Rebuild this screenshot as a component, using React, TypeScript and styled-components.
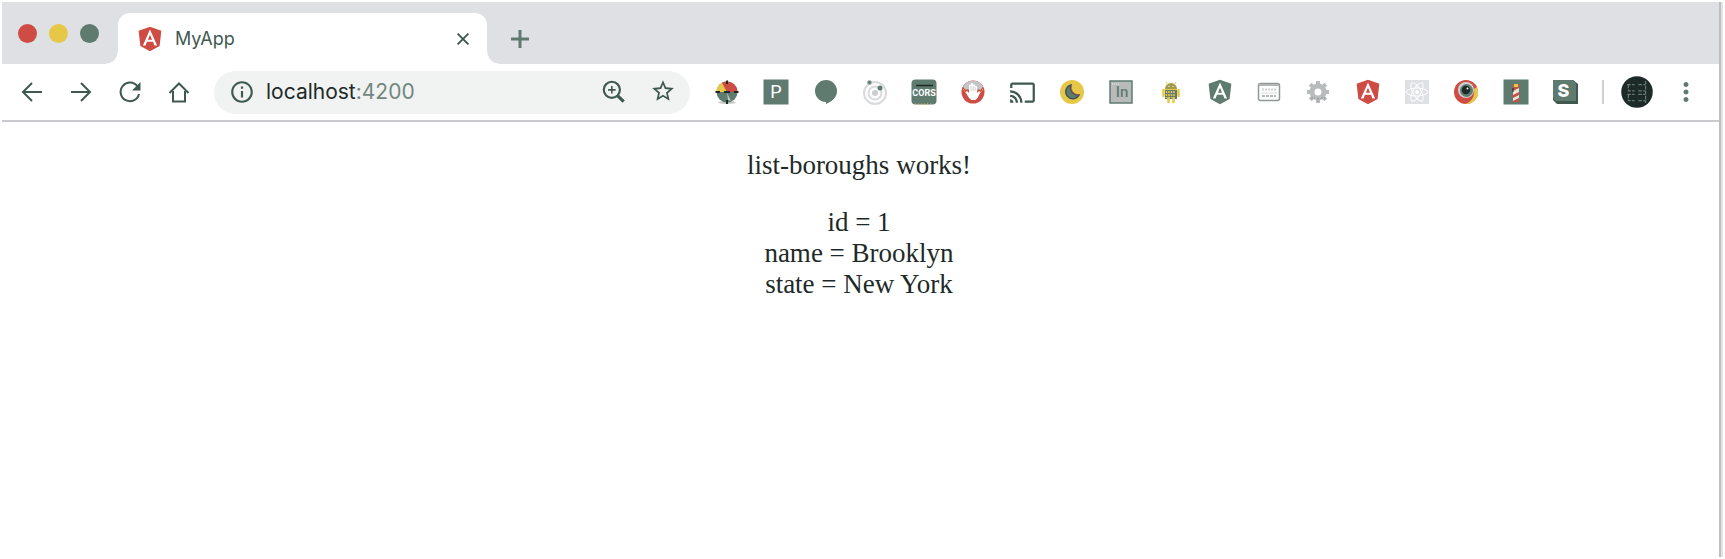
import React from 'react';
import styled, { createGlobalStyle } from 'styled-components';
import { MdCast, MdInfoOutline, MdMoreVert, MdStarBorder, MdZoomIn } from 'react-icons/md';
import { FaAngular, FaReact } from 'react-icons/fa';

const c = {
  green: '#5f7b70',
  dark: '#1d2a28',
  icon: '#3f5850',
  red: '#cf4c45',
  yellow: '#e6c748',
  strip: '#dfe0e4',
  field: '#f1f3f2',
  grey: '#bcbec0',
};

const Global = createGlobalStyle`
  * { box-sizing: border-box; }
  body { margin: 0; background: #fff; }
`;

const Frame = styled.div`
  margin: 2px 4px 2px 2px;
  min-height: calc(100vh - 4px);
  border-right: 2px solid ${c.grey};
  box-shadow: 2px 0 0 #e3e4e8;
  background: #fff;
`;

const TabStrip = styled.header`
  display: flex;
  align-items: flex-end;
  height: 62px;
  background: ${c.strip};
`;

const Lights = styled.div`
  display: flex;
  align-self: stretch;
  align-items: center;
  gap: 12px;
  padding: 0 19px 0 16px;
`;

const Light = styled.button<{ $color: string }>`
  width: 19px;
  height: 19px;
  padding: 0;
  border: 0;
  border-radius: 50%;
  background: ${(p) => p.$color};
`;

const Tab = styled.div`
  position: relative;
  display: flex;
  align-items: center;
  width: 369px;
  height: 51px;
  padding: 0 14px 0 18px;
  border-radius: 12px 12px 0 0;
  background: #fff;
  &::before, &::after {
    content: '';
    position: absolute;
    bottom: 0;
    width: 12px;
    height: 12px;
  }
  &::before {
    right: 100%;
    background: radial-gradient(circle at 0 0, transparent 11px, #fff 12px);
  }
  &::after {
    left: 100%;
    background: radial-gradient(circle at 100% 0, transparent 11px, #fff 12px);
  }
`;

const TabTitle = styled.span`
  flex: 1;
  padding-left: 11px;
  font: 18px/24px Inter, sans-serif;
  color: ${c.icon};
`;

const IconButton = styled.button<{ $size?: number; $color?: string }>`
  display: flex;
  flex: none;
  align-items: center;
  justify-content: center;
  width: ${(p) => p.$size ?? 30}px;
  height: ${(p) => p.$size ?? 30}px;
  padding: 0;
  border: 0;
  background: none;
  color: ${(p) => p.$color ?? c.icon};
  svg { flex: none; display: block; }
`;

const NewTab = styled.div`
  display: flex;
  align-items: center;
  height: 51px;
  padding-left: 18px;
`;

const Toolbar = styled.div`
  display: flex;
  align-items: center;
  height: 58px;
  padding: 0 18px 0 15px;
  border-bottom: 2px solid #c9cacd;
`;

const Nav = styled.nav`
  display: flex;
  gap: 19px;
  padding-right: 20px;
`;

const Omnibox = styled.form`
  display: flex;
  align-items: center;
  flex: 0 1 476px;
  height: 43px;
  padding: 0 14px 0 15px;
  border-radius: 22px;
  background: ${c.field};
`;

const Address = styled.a`
  flex: 1;
  padding-left: 11px;
  font: 21px/28px Inter, sans-serif;
  color: ${c.dark};
  text-decoration: none;
  span { color: #71877f; }
`;

const Actions = styled.div`
  display: flex;
  gap: 22px;
`;

const Extensions = styled.div`
  display: flex;
  flex: 1;
  justify-content: space-between;
  padding: 0 24px;
`;

const Divider = styled.span`
  width: 2px;
  height: 24px;
  background: #cfd0d3;
`;

const Profile = styled.div`
  display: flex;
  padding: 0 18px 0 17px;
`;

const Page = styled.main`
  padding: 28px 3px 0 0;
  font: 27px/31px 'Liberation Serif', serif;
  color: ${c.dark};
  text-align: center;
  p { margin: 0 0 26px; }
`;

const Art = ({ size = 26, children }: { size?: number; children: React.ReactNode }) => (
  <svg width={size} height={size} viewBox="0 0 26 26" fill="none" aria-hidden="true">{children}</svg>
);

const extensions: { name: string; art: React.ReactNode }[] = [
  {
    name: 'Color wheel',
    art: (
      <Art>
        <ellipse cx="13" cy="23.500" rx="9" ry="1.500" fill="#c3c7c5" />
        <circle cx="13" cy="13" r="10.500" fill={c.green} />
        <path d="M13 13H2.500a10.500 10.500 0 0 1 6-9.400z" fill={c.yellow} />
        <path d="M13 13 8 3.800A10.500 10.500 0 0 1 23.500 13z" fill={c.red} />
        <path d="m13 14 4 8-3-1z" fill="#c3c7c5" />
        <path d="M13 1.500V5M13 21v4M1.500 13H6M20 13h4.500M10 13h6" stroke={c.dark} strokeWidth="2" />
      </Art>
    ),
  },
  {
    name: 'P',
    art: (
      <Art>
        <rect x="0.500" y="0.500" width="25" height="25" fill={c.green} />
        <text x="13" y="19" textAnchor="middle" fontFamily="Roboto, sans-serif" fontSize="18" fill="#fff">P</text>
      </Art>
    ),
  },
  {
    name: 'Chat',
    art: (
      <Art>
        <circle cx="13" cy="12" r="11" fill={c.green} />
        <path d="M13 20v5c5-2 8-5 10-9z" fill={c.green} />
      </Art>
    ),
  },
  {
    name: 'Orbit',
    art: (
      <Art>
        <circle cx="13" cy="14" r="11" stroke="#d8dadc" strokeWidth="2" />
        <circle cx="13" cy="14" r="6.500" stroke="#d8dadc" strokeWidth="2" />
        <circle cx="13" cy="14" r="3" fill="#cccfd1" />
        <circle cx="7.500" cy="3.500" r="2" fill={c.green} stroke="#a8b3ae" />
        <circle cx="18" cy="9" r="2.500" fill={c.green} />
      </Art>
    ),
  },
  {
    name: 'CORS',
    art: (
      <Art>
        <rect x="0.500" y="0.500" width="25" height="25" rx="4" fill={c.green} />
        <path d="M5 6.500h17" stroke={c.dark} strokeWidth="1.500" />
        <path d="M4 25h18" stroke={c.yellow} strokeDasharray="1 2" />
        <text x="13" y="17" textAnchor="middle" fontFamily="Roboto, sans-serif" fontWeight="700" fontSize="9" fill="#fff">CORS</text>
      </Art>
    ),
  },
  {
    name: 'Blocker',
    art: (
      <Art>
        <circle cx="13" cy="13" r="11.500" fill={c.red} />
        <path d="M3 7.500a11.500 11.500 0 0 1 20 0l-2 3H5z" fill="#c4c5c7" />
        <path d="M9 19 5.500 13l1.500-1 2 2V6.500c0-1.500 2-1.500 2 0V5c0-1.500 2.200-1.500 2.200 0v1.500c0-1.500 2-1.500 2 0V8c0-1.300 2-1.300 2 0v6l1.800-2 1.500 1-3 6-2 2h-4z" fill="#fff" />
        <path d="M11 7v5M13.200 7v5M15.200 8v4" stroke={c.grey} strokeWidth=".7" />
        <path d="m3 10 3 4M23 10l-3 4" stroke={c.yellow} strokeDasharray="1 1" />
      </Art>
    ),
  },
  { name: 'Cast', art: <MdCast size={27} color={c.icon} /> },
  {
    name: 'Dark mode',
    art: (
      <Art>
        <circle cx="13" cy="13" r="12" fill={c.yellow} />
        <path d="M12 6a7 7 0 1 0 8 10A7.500 7.500 0 0 1 12 6z" fill={c.green} stroke={c.icon} strokeWidth="1.500" />
        <path d="M12.500 6.500a7.300 7.300 0 0 0 6.500 9.300" stroke={c.red} strokeWidth=".8" />
      </Art>
    ),
  },
  {
    name: 'In',
    art: (
      <Art>
        <rect x="2" y="2" width="22" height="22" fill="#b9bbbb" stroke={c.green} strokeWidth="1.500" />
        <path d="M4 5h8" stroke="#eee" strokeDasharray="1 1" />
        <text x="14" y="18" textAnchor="middle" fontFamily="Roboto, sans-serif" fontWeight="500" fontSize="15" fill={c.green}>In</text>
      </Art>
    ),
  },
  {
    name: 'Android',
    art: (
      <Art>
        <path d="M7 10a6 6 0 0 1 12 0z" fill="#a19a4c" />
        <rect x="7" y="11" width="12" height="9" fill={c.green} />
        <path d="M8.500 12v7M11 12v7M13.500 12v7M16 12v7" stroke={c.yellow} strokeDasharray="2 1" strokeWidth="1.500" />
        <path d="M5.500 11v6M20.500 11v6M10.500 19v4M15.500 19v4" stroke={c.yellow} strokeWidth="2.500" strokeLinecap="round" />
        <path d="m8 3 2 3M18 3l-2 3M7 10.500h12" stroke={c.yellow} />
        <path d="M10.500 7.500h1M14.500 7.500h1" stroke="#fff" />
      </Art>
    ),
  },
  { name: 'Angular', art: <FaAngular size={28} color={c.green} /> },
  {
    name: 'Form filler',
    art: (
      <Art>
        <rect x="2.500" y="4.500" width="21" height="17" rx="2" fill="#fff" stroke="#8d9a95" strokeWidth="1.500" />
        <path d="M3 6h20" stroke="#b3b8b6" strokeWidth="2" />
        <path d="M6 10.500h14" stroke="#d0d3d2" strokeWidth="2" strokeDasharray="2 1" />
        <path d="M5 14h16" stroke="#d9dbdc" />
        <path d="M6 17h14" stroke="#b4bab7" strokeWidth="2" strokeDasharray="3 1" />
      </Art>
    ),
  },
  {
    name: 'Settings',
    art: (
      <Art>
        <circle cx="13" cy="13" r="6" stroke="#b9bcbd" strokeWidth="5" />
        <path d="M13 2v4M13 20v4M2 13h4M20 13h4M5.200 5.200 8 8M18 18l2.800 2.800M20.800 5.200 18 8M8 18l-2.800 2.800" stroke="#b9bcbd" strokeWidth="4" />
        <path d="M6 19h4M16 19h4M13 19v4" stroke="#84958e" strokeDasharray="2 1" />
      </Art>
    ),
  },
  { name: 'Augury', art: <FaAngular size={28} color={c.red} /> },
  {
    name: 'React',
    art: (
      <Art>
        <rect x="1" y="1" width="24" height="24" fill={c.strip} />
        <FaReact x="2" y="2" size={22} color="#fff" />
      </Art>
    ),
  },
  {
    name: 'Eye',
    art: (
      <Art>
        <circle cx="13" cy="13" r="12" fill={c.red} />
        <path d="M24 8a12 12 0 0 1-12 17c7-2 10-8 9-15z" fill={c.yellow} />
        <circle cx="13" cy="11" r="8" fill="#cfd3d1" />
        <circle cx="13.500" cy="11.500" r="6.500" fill={c.green} />
        <circle cx="13" cy="11" r="4.200" fill={c.dark} />
        <circle cx="14.500" cy="9.500" r="1" fill="#fff" />
      </Art>
    ),
  },
  {
    name: 'Lighthouse',
    art: (
      <Art>
        <rect x="0.500" y="0.500" width="25" height="25" fill={c.green} />
        <path d="M10 5h6v18h-6z" fill={c.red} />
        <path d="M11 5h4v3h-4z" fill={c.yellow} />
        <path d="m10 12 6-3v4l-6 3zM10 19l6-3v3l-6 3z" fill="#e9e3d8" />
        <path d="M10 9v4" stroke={c.dark} />
      </Art>
    ),
  },
  {
    name: 'S',
    art: (
      <Art>
        <path d="M1 1h20l5 4v20H5l-4-4z" fill={c.icon} />
        <path d="M1 1h18q5 0 5 5v16H6q-5 0-5-5z" fill={c.green} />
        <text x="11.500" y="17.500" textAnchor="middle" fontFamily="Inter, sans-serif" fontWeight="800" fontSize="18" fill="#fff">S</text>
      </Art>
    ),
  },
];

export default function App() {
  return (
    <>
      <Global />
      <Frame>
        <TabStrip>
          <Lights>
            <Light $color={c.red} aria-label="Close window" />
            <Light $color={c.yellow} aria-label="Minimize window" />
            <Light $color={c.green} aria-label="Zoom window" />
          </Lights>
          <Tab>
            <FaAngular size={28} color={c.red} aria-hidden="true" />
            <TabTitle>MyApp</TabTitle>
            <IconButton $size={20} aria-label="Close tab">
              <Art size={20}><path d="m6 6 14 14M20 6 6 20" stroke="currentColor" strokeWidth="2.500" /></Art>
            </IconButton>
          </Tab>
          <NewTab>
            <IconButton aria-label="New tab" $color={c.green}>
              <Art><path d="M13 4v18M4 13h18" stroke="currentColor" strokeWidth="3" /></Art>
            </IconButton>
          </NewTab>
        </TabStrip>
        <Toolbar>
          <Nav aria-label="History">
            <IconButton aria-label="Back">
              <Art><path d="M23 13H4M13 4l-9 9 9 9" stroke="currentColor" strokeWidth="2" /></Art>
            </IconButton>
            <IconButton aria-label="Forward">
              <Art><path d="M3 13h19M13 4l9 9-9 9" stroke="currentColor" strokeWidth="2" /></Art>
            </IconButton>
            <IconButton aria-label="Reload">
              <Art>
                <path d="M20.500 7.500A9.300 9.300 0 1 0 22 15" stroke="currentColor" strokeWidth="2" />
                <path d="M23.500 3v8.500H15z" fill="currentColor" />
              </Art>
            </IconButton>
            <IconButton aria-label="Home">
              <Art><path d="M3.500 14 13 4.500l9.500 9.500M7 12v10.500h12V12" stroke="currentColor" strokeWidth="2" /></Art>
            </IconButton>
          </Nav>
          <Omnibox>
            <IconButton type="button" $size={26} aria-label="Site information"><MdInfoOutline size={26} /></IconButton>
            <Address href="http://localhost:4200">localhost<span>:4200</span></Address>
            <Actions>
              <IconButton type="button" $size={28} aria-label="Page zoom">
                <Art size={28}>
                  <circle cx="11" cy="11" r="7.500" stroke="currentColor" strokeWidth="2" />
                  <path d="M11 7.500v7M7.500 11h7" stroke="currentColor" strokeWidth="1.500" />
                  <path d="m16.500 16.500 5.500 5.500" stroke="currentColor" strokeWidth="3" />
                </Art>
              </IconButton>
              <IconButton type="button" $size={26} aria-label="Bookmark"><MdStarBorder size={26} /></IconButton>
            </Actions>
          </Omnibox>
          <Extensions>
            {extensions.map((e) => (
              <IconButton key={e.name} $size={26} aria-label={e.name}>{e.art}</IconButton>
            ))}
          </Extensions>
          <Divider />
          <Profile>
            <IconButton $size={32} aria-label="Profile">
              <Art size={32}>
                <circle cx="13" cy="13" r="12.800" fill={c.dark} />
                <path d="M5 7h6M6 7v5h5M5 15h6M6 15v5h5M14 7h6M14 12h6M14 15h6M14 20h6M20 4v18" stroke={c.green} strokeDasharray="3 1" />
              </Art>
            </IconButton>
          </Profile>
          <IconButton $size={30} $color={c.green} aria-label="Menu"><MdMoreVert size={30} /></IconButton>
        </Toolbar>
        <Page>
          <p>list-boroughs works!</p>
          <div>id = 1</div>
          <div>name = Brooklyn</div>
          <div>state = New York</div>
        </Page>
      </Frame>
    </>
  );
}
